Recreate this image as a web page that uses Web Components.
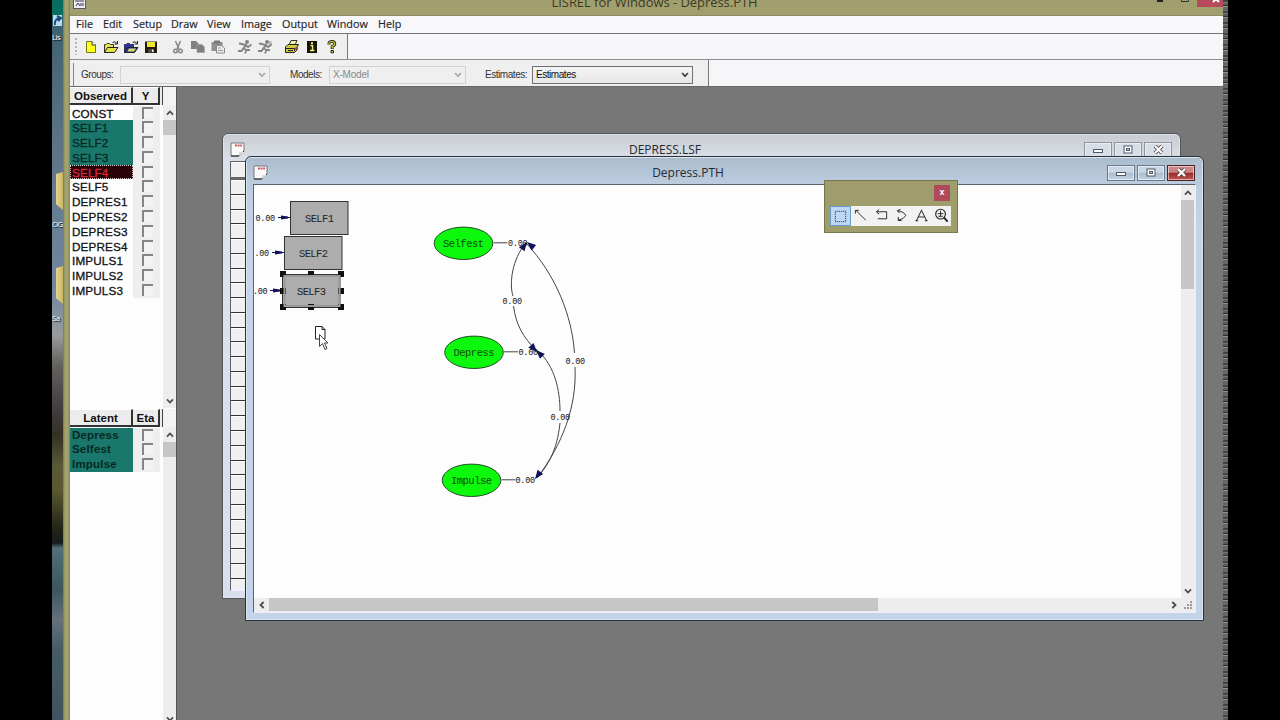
<!DOCTYPE html>
<html lang="en">
<head>
<meta charset="utf-8">
<title>LISREL for Windows - Depress.PTH</title>
<style>
    html, body { margin: 0; height: 720px; background: #000; overflow: hidden; }
    body { font-family: "Open Sans", "Noto Sans", sans-serif; width: 1280px; }
</style>
</head>
<body>
<lisrel-screen></lisrel-screen>

<script>
function attach(el, html) {
    const template = document.createElement('template');
    template.innerHTML = html;
    el.attachShadow({ mode: 'open' }).appendChild(template.content.cloneNode(true));
}

// Toolbar icons, drawn in a 16x16 box
const folder = (c) => `
    <path d="M1.500 13.500V5.500H3L4 4.500H6.500L7.500 5.500H10.500V8" fill="${c}" stroke="#333"/>
    <path d="M1.500 13.500L4.500 8.500H15L11.500 13.500Z" fill="${c}" stroke="#222"/>
    <path d="M9.500 3.500Q12 1.500 14 4.500M14.500 2V5H11.500" fill="none" stroke="#222"/>`;
const runner = `<g fill="none" stroke="#858585" stroke-width="1.900">
    <path d="M9.500 5L6.500 9.500L9.500 11L8 14.500M6.500 9L4.500 12H1M2 4.500L5 5L8.500 6L11 8L14.500 5.500M9 11H13"/></g>
    <circle cx="10" cy="3" r="2" fill="#858585"/>`;
const ICONS = {
    'new': '<path d="M3.500 2.500H9L12.500 6V13.500H3.500Z" fill="#ffff1c" stroke="#77771c"/><path d="M9 2.500V6H12.500" fill="#fff" stroke="#333"/>',
    open: folder('#e2e24a'),
    openData: folder('#2433b0') + '<path d="M4.500 12.500L6 9.500H13L11 12.500Z" fill="#d9d95a"/>',
    save: '<path d="M2 2.500H14V14H2Z" fill="#241c10"/><path d="M4 3H12V8H4Z" fill="#eee62e"/><path d="M5 10H11V13.500H5Z" fill="#57463e"/><path d="M9 10.500H10.500V13H9Z" fill="#eee"/>',
    cut: '<path d="M5.500 2L9 10M10.500 2L7 10" stroke="#858585" stroke-width="1.500" fill="none"/><circle cx="5.500" cy="12" r="1.800" fill="none" stroke="#858585" stroke-width="1.400"/><circle cx="10.500" cy="12" r="1.800" fill="none" stroke="#858585" stroke-width="1.400"/>',
    copy: '<path d="M1 2H6L8.500 4.500V10H1Z" fill="#808080"/><path d="M7 5.500H12L14.500 8V13.500H7Z" fill="#808080" stroke="#a5a5a5" stroke-width=".7"/>',
    paste: '<path d="M1.500 3H12.500V12H1.500Z" fill="#909090"/><path d="M4 1.500H10V4.500H4Z" fill="#777"/><path d="M6.500 6.500H11.500L14.500 9V14H6.500Z" fill="#eee" stroke="#888"/><path d="M8 9H11M8 11.500H13" stroke="#999"/>',
    run: runner,
    runAll: runner + '<path d="M11 3H14.500M12 5H15" stroke="#858585"/>',
    print: '<path d="M5 6L7 1.500H13L11 6" fill="#f4f4a4" stroke="#333"/><path d="M1.500 8L4 5.500H14.500L13 8V11L10.500 13.500H1.500Z" fill="#d0c941" stroke="#222"/><path d="M2 9.500H10.500V12M4 11.500H9" fill="none" stroke="#222"/><path d="M11 8.500H14V10.500H11Z" fill="#c33"/>',
    info: '<path d="M3 2H13V14H3Z" fill="#151500"/><path d="M6.500 6.500H8.500V11M6 11.500H10.500" stroke="#f0ef80" stroke-width="1.500" fill="none"/><path d="M7 3.300H9V5H7Z" fill="#f0ef80"/>',
    help: '<path d="M5 5.500V4.200Q5.500 2.400 8 2.400T10.800 4.500Q10.800 6.300 8.200 7.500V10" fill="none" stroke="#222" stroke-width="2.900"/><path d="M5 5.300V4.200Q5.500 2.500 8 2.500T10.700 4.500Q10.700 6.300 8.200 7.500V9.500" fill="none" stroke="#dfd92e" stroke-width="1.200"/><path d="M7 11.500H9.500V13.800H7Z" fill="#dfd92e" stroke="#222"/>',
    // palette tools
    select: '<rect x="2.500" y="2.500" width="11" height="11" fill="none" stroke="#222" stroke-dasharray="1 1"/>',
    arrow: '<path d="M2 2.500L12.500 13M1.500 6V2.500H5" fill="none" stroke="#222"/>',
    elbow: '<path d="M3 4H13.500V11.500H4M5.500 1.500L2.500 4L5.500 6.500" fill="none" stroke="#222"/>',
    curve: '<path d="M4 3Q11 4 12.500 8Q10.500 12 4.500 13M7 1.500L3.500 2.800L6 5.500M4.500 9.500V13.300H8" fill="none" stroke="#222"/>',
    text: '<path d="M2.500 13.500L8 2.500L13.500 13.500M4.500 9.500H11.500M1.500 13.500H4.500M11.500 13.500H14.500" fill="none" stroke="#333" stroke-width="1.100"/>',
    zoom: '<circle cx="7" cy="6.500" r="5.200" fill="none" stroke="#222" stroke-width="1.200"/><path d="M4 6H10M7 3V9M4.500 8.800H9.500" stroke="#222"/><path d="M10.500 10L14.500 14.500" stroke="#222" stroke-width="2"/>'
};

class LisIcon extends HTMLElement {
    constructor() {
        super();
        attach(this, `
            <style>
                :host { display: block; width: 16px; height: 16px; }
                svg { display: block; width: 100%; height: 100%; }
            </style>
            <svg viewBox="0 0 16 16">${ICONS[this.getAttribute('name')]}</svg>
        `);
    }
}

class MenuBar extends HTMLElement {
    constructor() {
        super();
        const items = [['File', 27], ['Edit', 30], ['Setup', 38], ['Draw', 36], ['View', 34], ['Image', 41], ['Output', 45], ['Window', 51], ['Help', 30]];
        attach(this, `
            <style>
                :host { display: flex; box-sizing: border-box; height: 18px; padding-left: 6px; background: #f8f8fa; border-bottom: 1px solid #77757b; color: #222; font-size: 10.800px; line-height: 16px; -webkit-text-stroke: .15px #222; }
            </style>
            ${items.map(([t, w]) => `<span style="width:${w}px">${t}</span>`).join('')}
        `);
    }
}

class ToolBar extends HTMLElement {
    constructor() {
        super();
        const groups = [['new', 'open', 'openData', 'save'], ['cut', 'copy', 'paste'], ['run', 'runAll'], ['print', 'info', 'help']];
        attach(this, `
            <style>
                :host { display: flex; height: 25px; background: #f6f5f8; border-bottom: 1px solid #8e8c90; }
                .bar { display: flex; align-items: center; gap: 11px; box-sizing: border-box; width: 278px; padding: 0 0 0 5px; background: #efeff0; border-right: 1px solid #777; }
                .grip { width: 2px; height: 17px; margin-right: -5.500px; background: repeating-linear-gradient(#b5b5b5 0 2px, transparent 2px 4px); }
                .group { display: flex; gap: 4px; }
            </style>
            <div class="bar"><div class="grip"></div>
            ${groups.map(g => `<div class="group">${g.map(n => `<lis-icon name="${n}"></lis-icon>`).join('')}</div>`).join('')}
            </div>
        `);
    }
}

class ComboBox extends HTMLElement {
    constructor() {
        super();
        attach(this, `
            <style>
                :host { display: flex; align-items: center; font: 10px/15px "Liberation Sans", sans-serif; letter-spacing: -.45px; color: #333; }
                label { width: var(--label); }
                .box { display: flex; align-items: center; box-sizing: border-box; width: var(--box); height: 18px; padding: 0 3px; border: 1px solid #707070; background: linear-gradient(#f4f4f4, #e6e6e6); color: #111; }
                :host([disabled]) .box { border-color: #d2d2d4; background: #efefef; color: #888; letter-spacing: -.2px; }
                svg { margin-left: auto; }
                path { fill: none; stroke: #444; stroke-width: 1.700; }
                :host([disabled]) path { stroke: #aaa; }
            </style>
            <label>${this.getAttribute('label')}</label>
            <div class="box"><slot></slot><svg width="8" height="6"><path d="M1 1L4 4.200L7 1"/></svg></div>
        `);
    }
}

class ModelBar extends HTMLElement {
    constructor() {
        super();
        attach(this, `
            <style>
                :host { display: flex; height: 26px; background: #f6f5f8; border-bottom: 1px solid #68686a; }
                .bar { display: flex; align-items: center; box-sizing: border-box; width: 639px; padding: 3px 0 0 3px; background: #efeff0; border-right: 1px solid #777; }
                .grip { width: 1px; height: 23px; margin-right: 7px; background: #88868a; }
                .a { --label: 39px; --box: 150px; margin-right: 20px; }
                .b { --label: 39px; --box: 137px; margin-right: 19px; }
                .c { --label: 47px; --box: 161px; }
            </style>
            <div class="bar">
                <div class="grip"></div>
                <combo-box class="a" label="Groups:" disabled></combo-box>
                <combo-box class="b" label="Models:" disabled>X-Model</combo-box>
                <combo-box class="c" label="Estimates:">Estimates</combo-box>
            </div>
        `);
    }
}

// Scrollbar; --thumb gives the thumb's length
class ScrollBar extends HTMLElement {
    constructor() {
        super();
        attach(this, `
            <style>
                :host { display: flex; flex-direction: column; width: 13px; background: #ededee; align-items: center; }
                :host([horizontal]) { flex-direction: row; width: auto; height: 13px; }
                .end { flex: none; display: flex; align-items: center; justify-content: center; width: 13px; height: 15px; }
                :host([horizontal]) .end { width: 15px; height: 13px; }
                .thumb { width: 100%; height: var(--thumb, 15px); background: #c6c6c7; }
                :host([horizontal]) .thumb { width: var(--thumb); height: 13px; }
                .rest { flex: 1; }
                svg { display: block; }
                :host([horizontal]) svg { transform: rotate(-90deg); }
                path { fill: none; stroke: #4d4d4d; stroke-width: 1.800; }
            </style>
            <div class="end"><svg width="8" height="6"><path d="M1 4.700L4 1.500L7 4.700"/></svg></div>
            <div class="thumb"></div><div class="rest"></div>
            <div class="end"><svg width="8" height="6"><path d="M1 1.300L4 4.500L7 1.300"/></svg></div>
        `);
    }
}

class VariableList extends HTMLElement {
    constructor() {
        super();
        const chosen = (this.getAttribute('chosen') || '').split(' ');
        const rows = this.getAttribute('items').split(' ').map(n => {
            const state = n === this.getAttribute('current') ? 'current' : chosen.includes(n) ? 'chosen' : '';
            return `<div class="row"><span class="name ${state}">${n}</span><span class="check"><i></i></span></div>`;
        }).join('');
        attach(this, `
            <style>
                :host { display: flex; flex-direction: column; background: #fefdfe; font: 11.700px/15.400px "Liberation Sans", sans-serif; letter-spacing: .15px; color: #111; }
                .head { display: flex; flex: none; height: 18px; background: #f4f3f4; font-weight: bold; font-size: 11.500px; line-height: 17px; text-align: center; letter-spacing: 0; }
                .head span { box-sizing: border-box; border-bottom: 2px solid #333; border-right: 2px solid #333; background: #ececed; border-top: 1px solid #fff; }
                .head .n { width: 63px; }
                .head .y { width: 27px; box-shadow: 2px 0 #ececed, 3px 0 #444; }
                .body { display: flex; flex: 1; min-height: 0; }
                .rows { width: 93px; padding-top: .5px; }
                .row { display: flex; height: 14.800px; }
                .name { box-sizing: border-box; width: 63px; padding-left: 2px; -webkit-text-stroke: .3px currentColor; white-space: nowrap; }
                :host([bold]) .name { font-weight: bold; font-size: 11.500px; -webkit-text-stroke: 0; letter-spacing: .2px; }
                .chosen { background: #1a776b; color: #062821; }
                .current { background: #280206; color: #df2635; outline: 1px dotted #e5cccc; outline-offset: -1px; }
                .check { width: 27px; background: #efeeef; }
                .check i { display: block; box-sizing: border-box; width: 11px; height: 12px; margin: 1px 0 0 9px; border-top: 2px solid #858585; border-left: 2px solid #858585; background: #f3f3f3; }
            </style>
            <div class="head"><span class="n">${this.getAttribute('heading')}</span><span class="y">${this.getAttribute('axis')}</span></div>
            <div class="body"><div class="rows">${rows}</div><scroll-bar></scroll-bar></div>
        `);
    }
}

// MDI child window: caption with icon, title and three buttons
class MdiWindow extends HTMLElement {
    constructor() {
        super();
        attach(this, `
            <style>
                :host { display: flex; flex-direction: column; box-sizing: border-box; border: 1px solid #283238; border-radius: 6px 6px 0 0; padding: 0 7px 7px; background: linear-gradient(#aabccc, #bccde1 28px, #c4d5eb 80px, #c2d3ea); box-shadow: inset 0 0 0 1px #d9e6f2; }
                :host([inactive]) { border-color: #555; background: linear-gradient(#c9ccd2, #dde2ea 28px, #d9dfed); }
                header { display: flex; flex: none; height: 27px; align-items: center; }
                h1 { flex: 1; margin: 0; font-weight: normal; font-size: 12px; line-height: 16px; text-align: center; color: #252a30; padding: 5px 0 0 1px; }
                .doc { margin-top: 4px; }
                .buttons { display: flex; gap: 2px; margin: 4px 1px 0 0; }
                .buttons b { display: flex; align-items: center; justify-content: center; box-sizing: border-box; width: 28px; height: 16px; border: 1px solid #69788a; box-shadow: inset 0 0 0 1px #ffffff88; background: linear-gradient(#c9d6e5 45%, #aabccf 50%, #c2d3e5); }
                .buttons .x { background: linear-gradient(#ca8585 45%, #9d2a2a 50%, #bd5954); border-color: #501f24; }
                :host([inactive]) .buttons b { background: #d9dee6; border-color: #8d949d; }
                .content { display: flex; flex: 1; min-height: 0; box-sizing: border-box; border: 1px solid #59636c; border-right-color: #eef; border-bottom-color: #eef; background: #fefdfe; }
            </style>
            <header>
                <svg class="doc" width="15" height="15"><path d="M1 1H14V9L9 14H1Z" fill="#fbfafa" stroke="#777"/><path d="M1 14H9L14 9" fill="none" stroke="#222"/><path d="M5 3.500H12" stroke="#cb5962" stroke-width="2" stroke-dasharray="2 .6"/><path d="M9 14V10H14" fill="#ddd"/></svg>
                <h1>${this.getAttribute('caption')}</h1>
                <div class="buttons">
                    <b><svg width="12" height="10"><rect x="1.500" y="4.500" width="9" height="3" fill="#fff" stroke="#4d5966"/></svg></b>
                    <b><svg width="10" height="9"><rect x="1" y="1" width="8" height="7" fill="#fff" stroke="#4d5966"/><rect x="3.500" y="3.500" width="3" height="2" fill="#ccc" stroke="#4d5966"/></svg></b>
                    <b class="x"><svg width="11" height="9"><path d="M2 1L9 8M9 1L2 8" stroke="#50454d" stroke-width="3.800"/><path d="M2 1L9 8M9 1L2 8" stroke="#fff" stroke-width="2.200"/></svg></b>
                </div>
            </header>
            <div class="content"><slot></slot></div>
        `);
    }
}

class PathDiagram extends HTMLElement {
    constructor() {
        super();
        const value = (x, y, t = '0.00') => `<text class="v" x="${x}" y="${y + 3}" textLength="${t.length * 4.9}">${t}</text>`;
        const box = (x, y, t) => `<rect x="${x}" y="${y}" width="57.500" height="33" fill="#adadad" stroke="#333"/><text x="${x + 14.500}" y="${y + 20}" textLength="29">${t}</text>`;
        const oval = (x, y, t) => `<ellipse cx="${x}" cy="${y}" rx="29.300" ry="16.200" fill="#0cf80c" stroke="#234d23"/><text x="${x - 20.500}" y="${y + 3.500}" textLength="41" fill="#0a4d0a">${t}</text><path d="M${x + 30} ${y - .5}h14" class="l"/>`;
        const head = (x, y, a) => `<path d="M0 0L-9 -3.500V3.500Z" transform="translate(${x} ${y}) rotate(${a})" fill="#121258"/>`;
        const pin = (x, y) => `<path d="M${x - 12} ${y}h12" stroke="#121258" fill="none"/><path d="M${x - 9} ${y - 2}L${x - 2} ${y - 1}V${y + 1}L${x - 9} ${y + 2}Z" fill="#121258"/>`;
        const handles = [[283, 274], [311, 274], [341, 274], [283, 291], [341, 291], [283, 307], [311, 307], [341, 307]]
            .map(([x, y]) => `<rect x="${x - 3}" y="${y - 3}" width="6" height="6" fill="#111"/>`).join('');
        attach(this, `
            <style>
                :host { display: block; overflow: hidden; }
                svg { display: block; }
                text { font: 10.500px "Liberation Mono", monospace; fill: #222; }
                text[fill] { fill: #0a4d0a; }
                .v { font-size: 8.500px; fill: #111; }
                .l { fill: none; stroke: #44444c; }
            </style>
            <svg width="927" height="413" viewBox="254 185 927 413">
                ${value(255.500, 218)}${value(254.500, 252.500, '.00')}${value(253, 291, '.00')}
                ${box(290.500, 201.500, 'SELF1')}${box(284.500, 236.500, 'SELF2')}${box(282.500, 274.500, 'SELF3')}
                ${pin(290, 217.500)}${pin(284, 252.500)}${pin(282, 290.500)}
                ${handles}
                <rect x="284.500" y="276" width="55" height="30" fill="none" stroke="#999" stroke-width="2"/>
                <g class="l">
                    <path d="M526 243C512 259 509 284 513 296M513.500 306C516 325 523 337 536 350"/>
                    <path d="M526 243C556 275 572 316 574.500 353M575 367C577 407 562 445 537 478"/>
                    <path d="M538 351C555 366 560 391 560 411M560 423C557 451 548 465 537 478"/>
                </g>
                ${head(527, 242, -54)}${head(527, 242, -140)}${head(537, 352, 48)}${head(536, 350, 225)}${head(535, 479, 127)}
                ${oval(463.500, 243.300, 'Selfest')}${oval(474, 352.300, 'Depress')}${oval(471.500, 480.300, 'Impulse')}
                ${value(508, 243)}${value(518.500, 352)}${value(515.500, 480)}
                ${value(502.500, 300.500)}${value(565.500, 360.500)}${value(550.500, 416.500)}
            </svg>
        `);
    }
}

class DataRows extends HTMLElement {
    constructor() {
        super();
        attach(this, `
            <style>
                :host { display: flex; flex-direction: column; width: 16px; background: #f0f0f0; }
                div { flex: none; box-sizing: border-box; height: 14.780px; border-bottom: 1.500px solid #333; border-top: 1px solid #fff; }
                .top { height: 18px; border-bottom: 3px solid #666; }
            </style>
            <div class="top"></div>${'<div></div>'.repeat(27)}
        `);
    }
}

class ToolPalette extends HTMLElement {
    constructor() {
        super();
        attach(this, `
            <style>
                :host { display: flex; flex-direction: column; box-sizing: border-box; border: 1px solid #77764e; padding: 4px 6px 5px 5px; background: #a09d6c; }
                .close { align-self: flex-end; width: 16px; height: 16px; background: #b04a5a; color: #fff; font: bold 9px/15px "Liberation Sans", sans-serif; text-align: center; margin-right: 1px; }
                .tools { display: flex; gap: 1px; margin-top: 5px; background: #f2f2f2; }
                .tools div { display: flex; align-items: center; justify-content: center; width: 19px; height: 19px; }
                .tools .on { box-sizing: border-box; width: 21px; height: 20px; border: 1px solid #6b99c9; background: #bdd8f4; }
                lis-icon { width: 15px; height: 15px; }
            </style>
            <div class="close">x</div>
            <div class="tools">${['select', 'arrow', 'elbow', 'curve', 'text', 'zoom'].map((n, i) => `<div class="${i ? '' : 'on'}"><lis-icon name="${n}"></lis-icon></div>`).join('')}</div>
        `);
    }
}

class DesktopEdge extends HTMLElement {
    constructor() {
        super();
        attach(this, `
            <style>
                :host { display: flex; flex-direction: column; width: 11px; overflow: hidden; font-size: 8px; line-height: 12px; color: #fff; text-shadow: 1px 1px 1px #000;
                    background: linear-gradient(#096b60 0, #08705f 14px, #3b6170 20px, #4c6877 70px, #63798d 180px, #7188a0 290px, #9a9b9d 335px, #64625e 365px, #443f43 405px, #343024 435px, #5a5938 465px, #5c5931 490px, #202316 530px, #151d20 543px, #527078 548px, #3d565d 590px, #667079 620px, #465c62 650px, #40545f 720px); }
                .link { width: 9px; height: 11px; margin: 15px 0 5px 1px; background: #b9d9ed; }
                .link svg { display: block; }
                .folder { width: 7px; height: 38px; margin-left: 4px; background: linear-gradient(90deg, #e5d591, #cbb763); clip-path: polygon(0 5%, 100% 0, 100% 100%, 0 85%); }
                span { width: 11px; letter-spacing: -.6px; }
            </style>
            <div class="link"><svg width="9" height="11"><path d="M2 10Q1 4 7 3M4 1L8 3L5 6" fill="none" stroke="#174b80" stroke-width="2"/></svg></div>
            <span>Lis</span>
            <div class="folder" style="margin-top:129px"></div>
            <span style="margin-top:8px">OG</span>
            <div class="folder" style="margin-top:36px"></div>
            <span style="margin-top:8px">Sa</span>
        `);
    }
}

class LisrelScreen extends HTMLElement {
    constructor() {
        super();
        attach(this, `
            <style>
                :host { display: flex; width: 1280px; height: 720px; box-sizing: border-box; padding-left: 52px; overflow: hidden; }
                .app { display: flex; flex-direction: column; box-sizing: border-box; width: 1160px; padding-left: 7px; background: linear-gradient(90deg, #77784f, #a2a26d 2px, #a2a26d 5px, #7f8055 7px, #a29f6e 7px); }
                .caption { display: flex; flex: none; height: 15px; background: #a29f6e; border-bottom: 1px solid #8b8b66; color: #3a3925; }
                .caption .logo { margin: -3px 0 0 3px; flex: none; }
                .caption h1 { flex: 1; margin: -8px 0 0; font-weight: normal; font-size: 12.900px; line-height: 20px; text-align: center; }
                .caption .sys { display: flex; flex: none; height: 7px; width: 66px; margin-left: -66px; }
                menu-bar, tool-bar, model-bar { flex: none; }
                .main { display: flex; flex: 1; min-height: 0; }
                .side { display: flex; flex-direction: column; width: 106px; box-sizing: border-box; overflow: hidden; background: #fefdfe; }
                .one { height: 321px; flex: none; margin-bottom: 1px; }
                .two { height: 317px; flex: none; }
                /* child windows float freely over the workspace */
                .work { flex: 1; position: relative; overflow: hidden; background: #777; box-shadow: inset 1px 0 #555; }
                .work > * { position: absolute; }
                .lsf { left: 46px; top: 46px; width: 959px; height: 466px; }
                .pth { left: 69px; top: 69px; width: 959px; height: 465px; }
                tool-palette { left: 648px; top: 93px; width: 134px; height: 53px; }
                .cursor { left: 138px; top: 238px; }
                .view { display: flex; flex-direction: column; flex: 1; padding: 0 1px 1px 0; background: #ededee; }
                .upper { display: flex; flex: 1; min-height: 0; }
                path-diagram { flex: 1; background: #fefdfe; }
                .upper scroll-bar { --thumb: 89px; }
                .lower { display: flex; background: #ededee; }
                .lower scroll-bar { flex: 1; --thumb: 609px; }
                .noise { width: 5px; background: repeating-linear-gradient(#444 0 2px, #777 2px 3px, #5b5b5b 3px 5px, #303030 5px 6px, #929292 6px 7px, #666 7px 11px); }
            </style>
            <desktop-edge></desktop-edge>
            <div class="app">
                <div class="caption">
                    <svg class="logo" width="13" height="12"><rect x=".5" y=".5" width="12" height="11" fill="#eee" stroke="#557"/><path d="M2 4H11M3 9L5 6L7 9M8 6V9M10 6V9" stroke="#336" fill="none"/></svg>
                    <h1>LISREL for Windows - Depress.PTH</h1>
                    <svg class="sys" viewBox="0 0 66 7"><path d="M0 0H6V2H0Z" fill="#222"/><path d="M24.500 -3V1.500H31.500V-3" fill="none" stroke="#333"/><path d="M40 0H66V7H40Z" fill="#b64a5c"/><path d="M56 2L61 -3M62 2L57 -3" stroke="#fff" stroke-width="2"/></svg>
                </div>
                <menu-bar></menu-bar>
                <tool-bar></tool-bar>
                <model-bar></model-bar>
                <div class="main">
                    <div class="side">
                        <variable-list class="one" heading="Observed" axis="Y" current="SELF4" chosen="SELF1 SELF2 SELF3"
                            items="CONST SELF1 SELF2 SELF3 SELF4 SELF5 DEPRES1 DEPRES2 DEPRES3 DEPRES4 IMPULS1 IMPULS2 IMPULS3"></variable-list>
                        <variable-list class="two" bold heading="Latent" axis="Eta" chosen="Depress Selfest Impulse" items="Depress Selfest Impulse"></variable-list>
                    </div>
                    <div class="work">
                        <mdi-window class="lsf" inactive caption="DEPRESS.LSF"><data-rows></data-rows></mdi-window>
                        <mdi-window class="pth" caption="Depress.PTH">
                            <div class="view">
                                <div class="upper"><path-diagram></path-diagram><scroll-bar></scroll-bar></div>
                                <div class="lower"><scroll-bar horizontal></scroll-bar>
                                    <svg width="13" height="13"><path d="M3 10h2M6 10h2M9 10h2M6 7h2M9 7h2M9 4h2" stroke="#999" stroke-width="2"/></svg>
                                </div>
                            </div>
                        </mdi-window>
                        <tool-palette></tool-palette>
                        <svg class="cursor" width="16" height="28"><path d="M1.500 1.500H8L11 4.500V14H1.500Z" fill="#fff" stroke="#222"/><path d="M8 1.500V4.500H11" fill="none" stroke="#222"/><path d="M5.500 9.500V21.500L8.500 18.500L11 24.500L13 23.500L10.500 18H14Z" fill="#fff" stroke="#444"/></svg>
                    </div>
                </div>
            </div>
            <div class="noise"></div>
        `);
    }
}

customElements.define('lis-icon', LisIcon);
customElements.define('menu-bar', MenuBar);
customElements.define('tool-bar', ToolBar);
customElements.define('combo-box', ComboBox);
customElements.define('model-bar', ModelBar);
customElements.define('scroll-bar', ScrollBar);
customElements.define('variable-list', VariableList);
customElements.define('mdi-window', MdiWindow);
customElements.define('path-diagram', PathDiagram);
customElements.define('data-rows', DataRows);
customElements.define('tool-palette', ToolPalette);
customElements.define('desktop-edge', DesktopEdge);
customElements.define('lisrel-screen', LisrelScreen);
</script>
</body>
</html>
